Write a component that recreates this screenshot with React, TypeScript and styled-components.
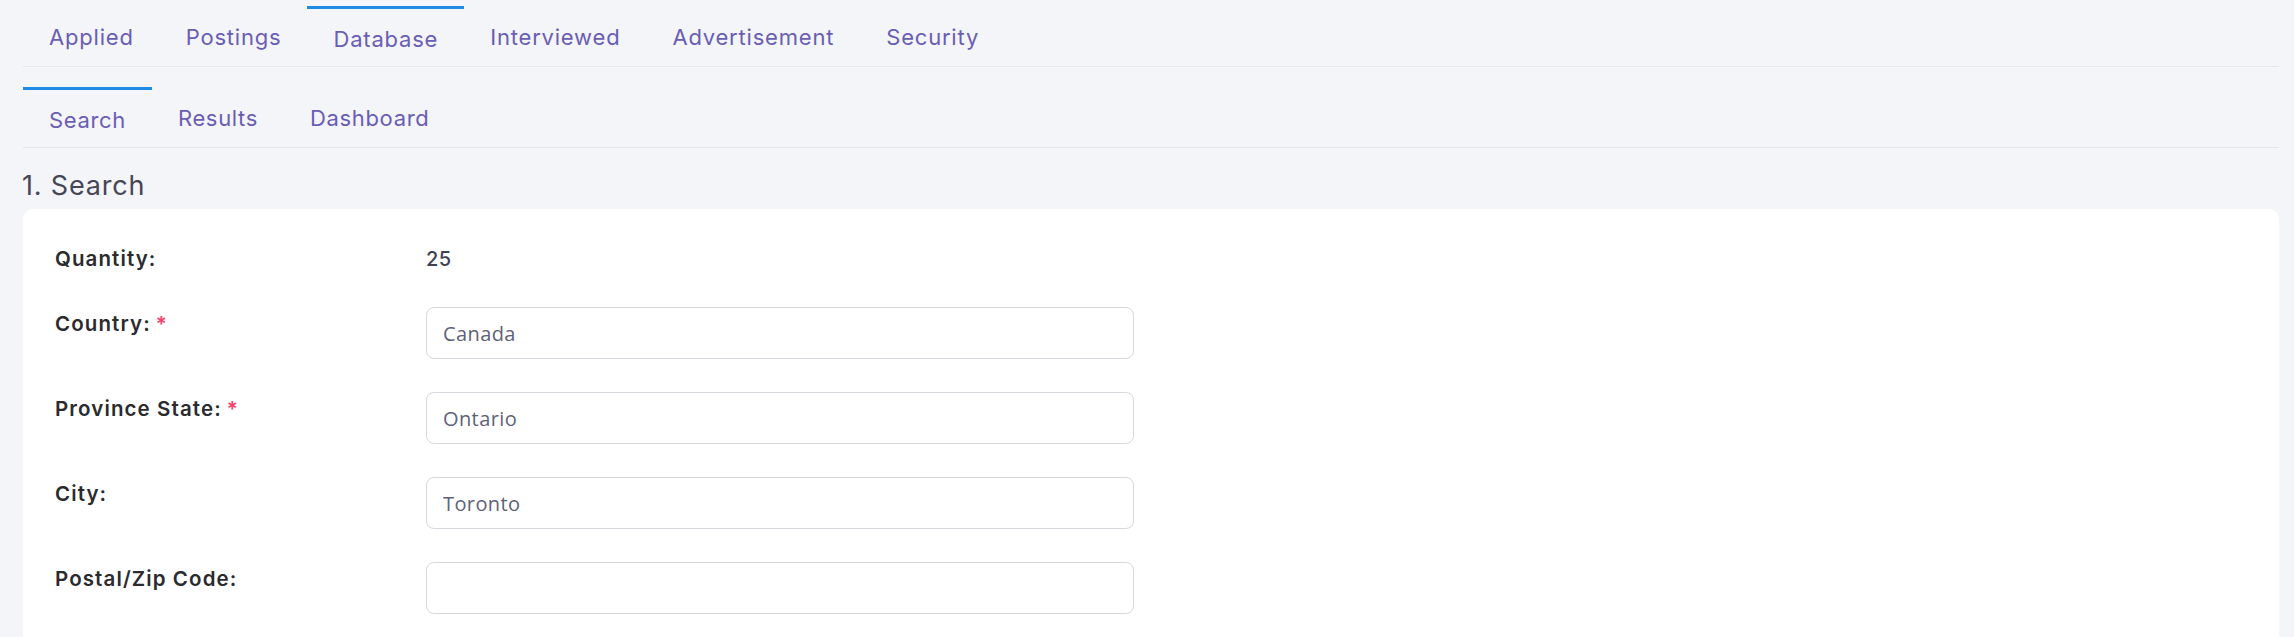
import React from 'react';
import styled, {createGlobalStyle} from "styled-components";

const GlobalStyle = createGlobalStyle`
  html, body {
    margin: 0;
    padding: 0;
    overflow: hidden;
    background: #f4f5f8;
  }
  * {
    box-sizing: border-box;
  }
`

const mainTabs = ['Applied', 'Postings', 'Database', 'Interviewed', 'Advertisement', 'Security'];
const subTabs = ['Search', 'Results', 'Dashboard'];

type Field = {
    label: string;
    value: string;
    required?: boolean;
};

const fields: Field[] = [
    {label: 'Country:', value: 'Canada', required: true},
    {label: 'Province State:', value: 'Ontario', required: true},
    {label: 'City:', value: 'Toronto'},
    {label: 'Postal/Zip Code:', value: ''},
];

export default function App() {
    return (
        <>
            <GlobalStyle/>
            <Page>
                <TabBar>
                    {mainTabs.map(t => (
                        <Tab key={t} active={t === 'Database'}>{t}</Tab>
                    ))}
                </TabBar>
                <SubTabBar>
                    {subTabs.map(t => (
                        <Tab key={t} active={t === 'Search'} narrow>{t}</Tab>
                    ))}
                </SubTabBar>
                <SectionTitle>1. Search</SectionTitle>
                <Card>
                    <FormRow short>
                        <Label>Quantity:</Label>
                        <Value>25</Value>
                    </FormRow>
                    {fields.map(f => (
                        <FormRow key={f.label}>
                            <Label>
                                {f.label}
                                {f.required && <Required>*</Required>}
                            </Label>
                            <Input defaultValue={f.value}/>
                        </FormRow>
                    ))}
                </Card>
            </Page>
        </>
    );
}

const Page = styled.div`
  padding: 6px 15px 0 23px;
  font-family: Inter, "Liberation Sans", sans-serif;
`

const TabBar = styled.nav`
  display: flex;
  border-bottom: 1px solid #e4e6ea;
`

const SubTabBar = styled(TabBar)`
  margin-top: 20px;
`

const Tab = styled.a<{ active?: boolean; narrow?: boolean }>`
  display: block;
  height: 60px;
  padding: ${p => p.active ? '15px 26px 0' : '13px 26px 0'};
  border-top: 3px solid ${p => p.active ? '#1e8ae3' : 'transparent'};
  font-size: 22px;
  line-height: 30px;
  letter-spacing: ${p => p.narrow ? '0.65px' : '0.8px'};
  color: #6a5db4;
  cursor: pointer;
`

const SectionTitle = styled.h2`
  margin: 22px 0 7px -1px;
  font-size: 27px;
  line-height: 32px;
  font-weight: 400;
  letter-spacing: 0.8px;
  color: #464655;
`

const Card = styled.section`
  background: #ffffff;
  border-radius: 10px;
  padding: 33px 32px 60px;
  display: flex;
  flex-direction: column;
  gap: 33px;
  min-height: 600px;
`

const FormRow = styled.div<{ short?: boolean }>`
  display: grid;
  grid-template-columns: 371px 708px;
  align-items: start;
  min-height: ${p => p.short ? '31px' : '52px'};
`

const Label = styled.label`
  padding-top: 2px;
  font-size: 20.5px;
  line-height: 30px;
  font-weight: 600;
  letter-spacing: 1.1px;
  color: #2b2b2f;
`

const Required = styled.span`
  color: #f1416c;
  margin-left: 5px;
`

const Value = styled.span`
  padding-top: 2px;
  font-size: 20px;
  line-height: 30px;
  font-weight: 500;
  letter-spacing: 0.5px;
  color: #3f4254;
`

const Input = styled.input`
  width: 708px;
  height: 52px;
  padding: 0 16px;
  border: 1px solid #d6d8dd;
  border-radius: 8px;
  background: #ffffff;
  font-family: "Open Sans", "Liberation Sans", sans-serif;
  font-size: 20px;
  letter-spacing: 0.4px;
  color: #5e6278;
  outline: none;
`
